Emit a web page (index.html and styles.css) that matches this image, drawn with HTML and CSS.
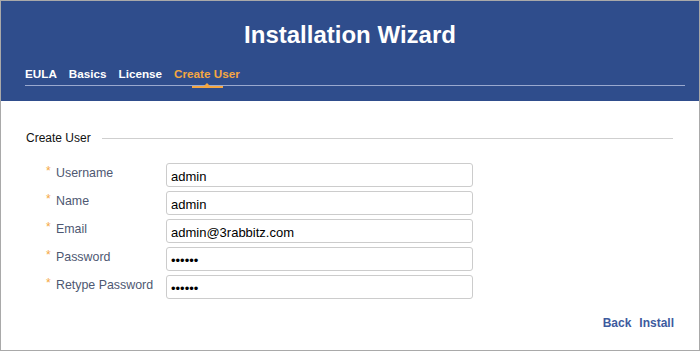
FILE: index.html
```html
<!DOCTYPE html>
<html lang="en">
<head>
    <meta charset="UTF-8">
    <title>Installation Wizard</title>
    <link rel="stylesheet" href="styles.css">
</head>
<body>
    <div class="wizard">
        <!-- Header with step tabs -->
        <div class="header">
            <h1>Installation Wizard</h1>
            <div class="tabs">
                <span class="tab">EULA</span>
                <span class="tab">Basics</span>
                <span class="tab">License</span>
                <span class="tab active">Create User</span>
            </div>
        </div>

        <!-- Create User form -->
        <div class="content">
            <div class="legend">
                <span>Create User</span>
                <span class="legend-line"></span>
            </div>
            <form class="form">
                <label class="field-label"><span class="req">*</span>Username</label>
                <input type="text" value="admin">
                <label class="field-label"><span class="req">*</span>Name</label>
                <input type="text" value="admin">
                <label class="field-label"><span class="req">*</span>Email</label>
                <input type="text" value="admin@3rabbitz.com">
                <label class="field-label"><span class="req">*</span>Password</label>
                <input type="password" value="123456">
                <label class="field-label"><span class="req">*</span>Retype Password</label>
                <input type="password" value="123456">
            </form>
            <div class="actions">
                <a href="#">Back</a>
                <a href="#">Install</a>
            </div>
        </div>
    </div>
</body>
</html>
```

FILE: styles.css
```css
body {
    margin: 0;
    font-family: "Liberation Sans", Arial, sans-serif;
}
.wizard {
    width: 698px;
    height: 349px;
    border: 1px solid #a9a9a9;
    display: flex;
    flex-direction: column;
}
.header {
    background-color: #2f4d8c;
    height: 100px;
    padding: 0 14px 0 24px;
    box-sizing: border-box;
}
h1 {
    margin: 0 0 0 -10px;
    padding-top: 20px;
    height: 44px;
    text-align: center;
    color: #fff;
    font-size: 24px;
    font-weight: bold;
}
.tabs {
    display: flex;
    gap: 12px;
    border-bottom: 1px solid #9aa9cf;
    height: 20px;
}
.tab {
    color: #fff;
    font-size: 11.7px;
    font-weight: bold;
    line-height: 16px;
    padding-top: 1px;
    position: relative;
}
.tab.active {
    color: #f5a742;
}
.tab.active::after {
    content: "";
    position: absolute;
    left: 18px;
    bottom: -3px;
    width: 31px;
    height: 2px;
    background: #f5a742;
}
.tab.active::before {
    content: "";
    position: absolute;
    left: 30px;
    bottom: -1px;
    border-left: 3px solid transparent;
    border-right: 3px solid transparent;
    border-bottom: 3px solid #f5a742;
}
.content {
    flex: 1;
    padding: 29px 26px 0 25px;
    display: flex;
    flex-direction: column;
}
.legend {
    display: flex;
    align-items: center;
    gap: 11px;
    font-size: 12px;
    color: #111;
    height: 16px;
}
.legend-line {
    flex: 1;
    border-top: 1px solid #cfcfcf;
    margin-top: 1px;
}
.form {
    display: grid;
    grid-template-columns: 120px 307px;
    row-gap: 4px;
    margin: 17px 0 0 20px;
    align-items: center;
}
.field-label {
    font-size: 12.4px;
    color: #4e5872;
    position: relative;
    padding-left: 10px;
    margin-top: -4px;
}
.req {
    position: absolute;
    left: 0;
    top: -2px;
    color: #f5a742;
    font-size: 12px;
}
input {
    height: 24px;
    box-sizing: border-box;
    border: 1px solid #cccccc;
    border-radius: 3px;
    padding: 2px 4px 0;
    font-family: "Liberation Sans", Arial, sans-serif;
    font-size: 13px;
    color: #000;
    margin: 0;
}
.actions {
    margin: auto -1px 20px 0;
    display: flex;
    justify-content: flex-end;
    gap: 8px;
}
.actions a {
    color: #3d5a9e;
    font-size: 12px;
    font-weight: bold;
    text-decoration: none;
}
```
